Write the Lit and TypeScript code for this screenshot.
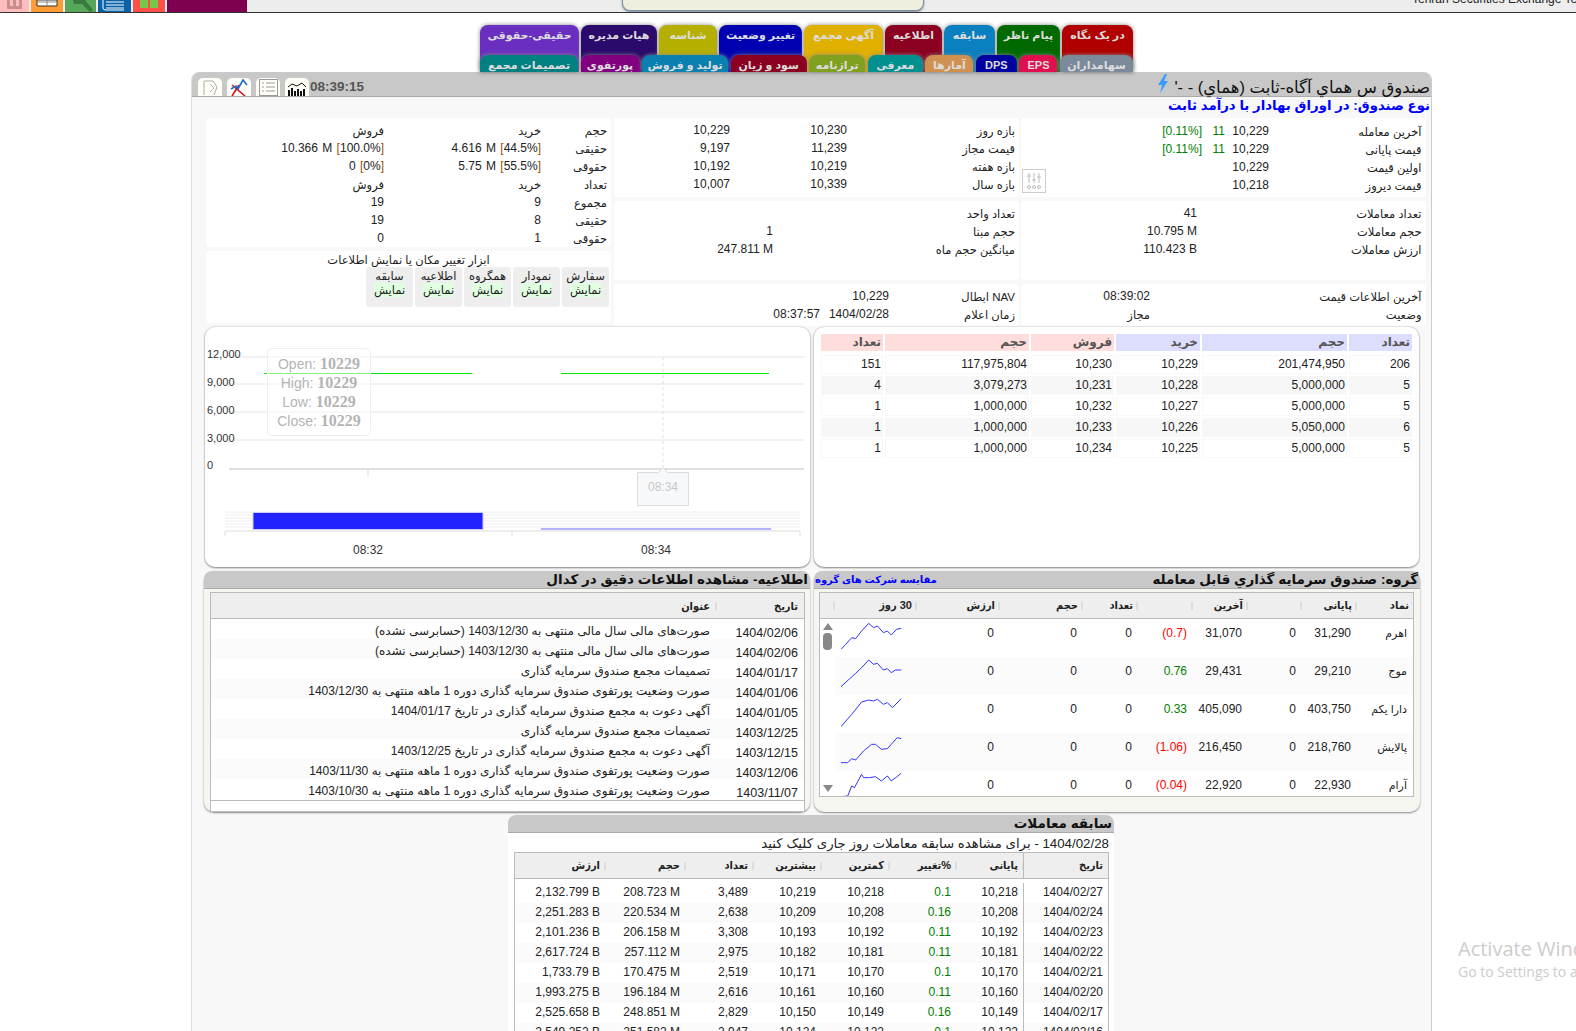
import { LitElement, html, css, svg } from 'lit';
import { customElement } from 'lit/decorators.js';

const row1 = [
  ['در یک نگاه', 71, '#b00000'],
  ['پیام ناظر', 63, '#006a00'],
  ['سابقه', 51, '#0a80c0'],
  ['اطلاعیه', 57, '#8b0020'],
  ['آگهی مجمع', 79, '#e0b000'],
  ['تغییر وضعیت', 83, '#0000b0'],
  ['شناسه', 58, '#b5b000'],
  ['هیات مدیره', 76, '#2a0a6a'],
  ['حقیقی-حقوقی', 99, '#6a2fc0'],
] as const;

const row2 = [
  ['سهامداران', 73, '#7a8a9a'],
  ['EPS', 38, '#e01050'],
  ['DPS', 41, '#0000a0'],
  ['آمارها', 48, '#d09050'],
  ['معرفی', 55, '#009090'],
  ['ترازنامه', 56, '#80a020'],
  ['سود و زیان', 76, '#8b0020'],
  ['تولید و فروش', 86, '#0a80b0'],
  ['پورتفوی', 59, '#800080'],
  ['تصمیمات مجمع', 98, '#008080'],
] as const;

const orders = [
  ['151', '117,975,804', '10,230', '10,229', '201,474,950', '206'],
  ['4', '3,079,273', '10,231', '10,228', '5,000,000', '5'],
  ['1', '1,000,000', '10,232', '10,227', '5,000,000', '5'],
  ['1', '1,000,000', '10,233', '10,226', '5,050,000', '6'],
  ['1', '1,000,000', '10,234', '10,225', '5,000,000', '5'],
];

const news = [
  ['1404/02/06', 'صورت‌های مالی سال مالی منتهی به 1403/12/30 (حسابرسی نشده)'],
  ['1404/02/06', 'صورت‌های مالی سال مالی منتهی به 1403/12/30 (حسابرسی نشده)'],
  ['1404/01/17', 'تصمیمات مجمع صندوق سرمایه گذاری'],
  ['1404/01/06', 'صورت وضعیت پورتفوی صندوق سرمایه گذاری دوره 1 ماهه منتهی به 1403/12/30'],
  ['1404/01/05', 'آگهی دعوت به مجمع صندوق سرمایه گذاری در تاریخ 1404/01/17'],
  ['1403/12/25', 'تصمیمات مجمع صندوق سرمایه گذاری'],
  ['1403/12/15', 'آگهی دعوت به مجمع صندوق سرمایه گذاری در تاریخ 1403/12/25'],
  ['1403/12/06', 'صورت وضعیت پورتفوی صندوق سرمایه گذاری دوره 1 ماهه منتهی به 1403/11/30'],
  ['1403/11/07', 'صورت وضعیت پورتفوی صندوق سرمایه گذاری دوره 1 ماهه منتهی به 1403/10/30'],
];

// spark points are in the reference's zoomed units, so the viewBox scales them down
const group = [
  { top: 159, name: 'اهرم', close: '31,290', last: '31,070', change: '(0.7)', up: false,
    spark: '78,250 90,235 105,215 115,218 130,195 148,172 160,185 170,180 185,200 195,195 205,207 218,190 230,187' },
  { top: 273, name: 'موج', close: '29,210', last: '29,431', change: '0.76', up: true,
    spark: '78,362 100,338 115,322 130,305 148,282 160,295 170,292 185,312 195,308 205,320 215,312 230,312' },
  { top: 387, name: 'دارا یکم', close: '403,750', last: '405,090', change: '0.33', up: true,
    spark: '78,482 105,445 130,408 148,402 160,405 170,400 185,415 195,410 208,425 230,398' },
  { top: 501, name: 'پالایش', close: '218,760', last: '216,450', change: '(1.06)', up: false,
    spark: '78,590 95,590 105,578 115,582 135,555 155,535 165,535 180,550 195,548 220,515 230,518' },
  { top: 615, name: 'آرام', close: '22,930', last: '22,920', change: '(0.04)', up: false,
    spark: '78,692 95,690 105,660 112,665 130,625 135,635 150,635 165,632 180,645 195,630 205,645 230,622' },
];

const history = [
  ['2,132.799 B', '208.723 M', '3,489', '10,219', '10,218', '0.1', '10,218', '1404/02/27'],
  ['2,251.283 B', '220.534 M', '2,638', '10,209', '10,208', '0.16', '10,208', '1404/02/24'],
  ['2,101.236 B', '206.158 M', '3,308', '10,193', '10,192', '0.11', '10,192', '1404/02/23'],
  ['2,617.724 B', '257.112 M', '2,975', '10,182', '10,181', '0.11', '10,181', '1404/02/22'],
  ['1,733.79 B', '170.475 M', '2,519', '10,171', '10,170', '0.1', '10,170', '1404/02/21'],
  ['1,993.275 B', '196.184 M', '2,616', '10,161', '10,160', '0.11', '10,160', '1404/02/20'],
  ['2,525.658 B', '248.851 M', '2,829', '10,150', '10,149', '0.16', '10,149', '1404/02/17'],
  ['2,549.252 B', '251.582 M', '2,947', '10,124', '10,122', '0.1', '10,122', '1404/02/16'],
];

@customElement('app-root')
export class AppRoot extends LitElement {
  static styles = css`
    :host {
      display: block;
      position: relative;
      height: 1031px;
      overflow: hidden;
      background: #fff;
      color: #222;
      font: 12px/18px "Liberation Sans", "DejaVu Sans", sans-serif;
    }
    .topbar {
      display: flex;
      height: 12px;
      gap: 2px;
      background: #ededed;
      border-bottom: 1px solid #333;
      overflow: hidden;
      position: relative;
    }
    .topbar .app { height: 12px; flex: none; }
    .topbar svg { display: block; }
    .notice {
      position: absolute;
      left: 622px;
      top: -10px;
      width: 300px;
      height: 19px;
      background: #efefdf;
      border: 1px solid #7f8f9f;
      border-radius: 8px;
      box-shadow: 0 1px 2px #789;
    }
    .corp {
      position: absolute;
      left: 1412px;
      top: -8px;
      font-size: 12px;
      line-height: 14px;
      white-space: nowrap;
    }
    .tabs { margin: 12px 0 0 480px; width: 653px; height: 47px; }
    .tabrow { display: flex; flex-direction: row-reverse; gap: 2px; }
    .tabrow .tab {
      border-radius: 8px 8px 0 0;
      color: #ddd;
      font-size: 11px;
      font-weight: bold;
      text-align: center;
      white-space: nowrap;
      box-shadow: 0 0 4px #888;
    }
    .tabrow.upper .tab { height: 47px; line-height: 21px; }
    .tabrow.lower { margin-top: -17px; gap: 2.6px; position: relative; }
    .tabrow.lower .tab { height: 17px; line-height: 21px; overflow: hidden; }

    .main {
      margin-left: 191px;
      width: 1241px;
      min-height: 960px;
      background: #f8f8f8;
      border-right: 1px solid #ccc;
      border-left: 1px solid #ddd;
      border-radius: 8px 8px 0 0;
      box-sizing: border-box;
    }
    .mainhead {
      display: flex;
      align-items: flex-end;
      height: 25px;
      background: #c8c8c8;
      border-bottom: 1px solid #aaa;
      border-radius: 8px 8px 0 0;
      padding: 0 1px 0 6px;
      box-sizing: border-box;
    }
    .tool {
      width: 24px;
      height: 18px;
      margin-right: 5px;
      background: #fffff8;
      border-radius: 5px 5px 0 0;
    }
    .tool svg { display: block; }
    .clock { font-size: 13.5px; font-weight: bold; color: #555; line-height: 18px; margin-left: -4px; }
    .grow { flex: 1; }
    .bolt { margin: 0 5px 3px 0; }
    .fundname { font-size: 16.5px; line-height: 18px; color: #111; direction: rtl; white-space: nowrap; }
    .fundtype {
      height: 21px;
      line-height: 17px;
      padding-right: 1px;
      text-align: right;
      direction: rtl;
      color: #0000ff;
      font-size: 13.3px;
      font-weight: bold;
    }
    .info { display: flex; gap: 3px; padding-left: 14px; }
    .left { display: flex; flex-direction: column; gap: 4px; width: 405px; flex: none; }
    .right {
      display: grid;
      grid-template-columns: 405px 405px;
      grid-template-rows: 79px 79px 42px;
      gap: 4px 2px;
    }
    .card { background: #fff; border-radius: 4px; box-sizing: border-box; }
    .rows { display: grid; grid-auto-rows: 18px; padding: 3px 4px 0 0; text-align: right; }
    .l { font-size: 11.5px; line-height: 20px; direction: rtl; white-space: nowrap; }
    .left .card:first-child { height: 129px; }
    .vol { word-spacing: 1px; }
    .cols-a { grid-template-columns: 178px 157px 66px; }
    .cols-c { grid-template-columns: 116px 117px 168px; }
    .cols-d { grid-template-columns: 181px 23px 44px 152.5px; padding-right: 4.500px; padding-top: 4px; }
    .cols-e { grid-template-columns: 176px 224.5px; padding-right: 4.500px; }
    .cols-f { grid-template-columns: 159px 242px; }
    .cols-g { grid-template-columns: 129px 271.5px; padding-right: 4.500px; }
    .cols-h { grid-template-columns: 206px 69px 126px; }
    .up { color: #008000; }
    .down { color: #ff0000; }
    .br { color: #a05000; }
    .sliders {
      grid-column: 1;
      grid-row: 3 / span 2;
      justify-self: start;
      align-self: end;
      margin: 0 0 1px 1px;
      display: block;
    }
    .tools { height: 72px; text-align: center; }
    .toolstitle { font-size: 11.5px; line-height: 18px; height: 16px; direction: rtl; text-align: center; }
    .pickers { display: flex; flex-direction: row-reverse; gap: 2px; padding: 0 2px; }
    .pick {
      width: 47px;
      height: 40px;
      background: #eee;
      border-radius: 3px;
      line-height: 14px;
      padding-top: 2px;
      box-sizing: border-box;
      font-size: 11.5px;
    }
    .pick b { font-weight: normal; background: #e0ffe0; display: inline-block; }

    .pair { display: flex; gap: 4px; padding-left: 13px; }
    .box {
      width: 605px;
      height: 240px;
      flex: none;
      background: #fff;
      border-radius: 10px;
      box-shadow: 0 1px 2px #888, 0 0 2px #bbb;
      margin-top: 1px;
      box-sizing: border-box;
    }
    .chart { display: block; }
    .chart text { font: 11px "Liberation Sans", sans-serif; fill: #333; }
    .orders {
      display: grid;
      grid-template-columns: 62px 144px 83px 84px 145px 63px;
      grid-auto-rows: 19px;
      gap: 2px;
      padding: 7px 0 0 7px;
      text-align: right;
    }
    .orders > div { padding-right: 2px; background: #fff; outline: 1px solid #f8f8f8; outline-offset: -1px; line-height: 19px; }
    .orders .hd { font-weight: bold; color: #555; height: 17px; line-height: 17px; margin-bottom: 1px; outline: none; font-size: 12px; }
    .orders .sell { background: #ffdddd; }
    .orders .buy { background: #ddddff; }
    .orders .alt { background: #f7f7f7; }
    .panels { display: flex; gap: 4px; padding-left: 12px; margin-top: 4px; }
    .panel {
      width: 606px;
      height: 241px;
      flex: none;
      background: #f6f6f1;
      border-radius: 10px;
      box-shadow: 0 1px 2px #888;
      box-sizing: border-box;
    }
    .panelhead {
      display: flex;
      justify-content: space-between;
      align-items: center;
      height: 17px;
      background: #c8c8c8;
      border-bottom: 1px solid #aaa;
      border-radius: 8px 8px 0 0;
      padding: 0 2px 0 1px;
      font-size: 13.5px;
      font-weight: bold;
      color: #111;
      white-space: nowrap;
    }
    .panelhead span { direction: rtl; }
    .panelhead .link { color: #0000ff; font-size: 10px; }
    .grid { background: #fff; border: 1px solid #bbb; box-sizing: border-box; overflow: hidden; }
    .newsgrid { margin: 3px 0 0 6px; width: 595px; height: 220px; }
    .ghead {
      height: 26px;
      background: #eee;
      border-bottom: 1px solid #bbb;
      box-sizing: border-box;
      font-weight: bold;
      font-size: 11px;
      font-stretch: condensed;
      line-height: 27px;
    }
    .ghead .c { position: relative; direction: rtl; }
    .ghead .c::after { content: ""; position: absolute; right: 0; top: 9px; width: 2px; height: 8px; background: #ddd; }
    .ghead .c:last-child::after { display: none; }
    .newsrow, .newshead { display: grid; grid-template-columns: 506px 1fr; text-align: right; }
    .newsrow { height: 20px; font-size: 12px; line-height: 24px; }
    .newsrow.alt, .grow-alt { background: #fbfbfb; }
    .newsrow .t { padding-right: 7px; direction: rtl; text-align: right; white-space: nowrap; }
    .newsrow .d { padding-right: 6px; line-height: 28px; font-size: 12.5px; }
    .newshead .t { padding-right: 7px; }
    .newshead .d { padding-right: 6px; }
    .newslist { height: 181px; border-bottom: 1px solid #bbb; overflow: hidden; }

    .groupgrid { margin: 3px 0 0 5px; width: 595px; height: 205px; }
    .gcols { display: grid; grid-template-columns: 15px 82px 83px 83px 55px 55px 55px 54px 55px 57px; text-align: right; line-height: 25px; }
    .gcols > .c { padding-right: 5px; }
    .groupbody { display: flex; height: 179px; }
    .scroll { width: 15px; flex: none; display: flex; flex-direction: column; align-items: center; padding: 4px 0 6px; box-sizing: border-box; }
    .scroll .thumb { width: 9px; height: 17px; background: #888; border-radius: 4px; margin-top: 3px; }
    .scroll .grow { flex: 1; }
    .tri-up { width: 0; height: 0; border: 5px solid transparent; border-top: 0; border-bottom: 7px solid #888; }
    .tri-down { width: 0; height: 0; border: 5px solid transparent; border-bottom: 0; border-top: 7px solid #888; }
    .grouprows { flex: 1; overflow: hidden; }
    .grow-row { display: grid; grid-template-columns: 82px 83px 83px 55px 55px 55px 54px 55px 57px; height: 38px; text-align: right; line-height: 29px; }
    .grow-row > div { padding-right: 6px; }
    .grow-row .name { font-size: 11px; padding-right: 7px; }
    .grow-row .spark { padding: 0 0 0 6px; }
    .spark svg { display: block; }

    .hist { margin: 3px 0 0 316px; width: 606px; height: 240px; background: #fff; border-radius: 10px 10px 0 0; }
    .hist .panelhead { padding-right: 2px; }
    .histnote { direction: rtl; text-align: right; padding-right: 5px; line-height: 22px; height: 19px; font-size: 13.3px; white-space: nowrap; }
    .histgrid { margin-left: 6px; width: 595px; height: 200px; border-bottom: 0; }
    .hcols { display: grid; grid-template-columns: 91px 80px 68px 68px 68px 67px 67px 86px; text-align: right; }
    .hcols > div { padding-right: 6px; }
    .hcols .date { border-left: 1px solid #bbb; padding-right: 7px; margin-left: -1px; }
    .hrow { height: 20px; line-height: 18px; }
    .hrow.alt { background: #fbfbfb; }
    .hhead { line-height: 25px; }
    .histbody { padding-top: 4px; }

    .watermark { position: absolute; left: 1458px; top: 936px; color: #ccc; font-family: "Open Sans", sans-serif; font-size: 20px; line-height: 26px; white-space: nowrap; }
    .watermark small { display: block; font-size: 14px; line-height: 20px; }
  `;

  private renderTopbar() {
    return html`
      <div class="topbar">
        <div class="app" style="width:29px;background:#ffbcbc">
          <svg width="29" height="12"><path d="M7 0v9h15V0h-3v6h-3V0h-3v6h-3V0z" fill="#c98f8f"/></svg>
        </div>
        <div class="app" style="width:32px;background:#ff9c33">
          <svg width="32" height="12"><path d="M6 0h20v6H6z" fill="#fff" stroke="#333"/><path d="M16 0v6M6 2h20" stroke="#888"/></svg>
        </div>
        <div class="app" style="width:31px;background:#55a85a">
          <svg width="31" height="12"><path d="M8 0l12 0 8 10-3 2-8-8H9z" fill="#3a7a3f"/></svg>
        </div>
        <div class="app" style="width:33px;background:#0a62a8">
          <svg width="33" height="12"><path d="M5 0v8q0 2 3 2h18M8 2h18M8 5h18M8 8h18" stroke="#fff" fill="none"/></svg>
        </div>
        <div class="app" style="width:32px;background:#ff5048">
          <svg width="32" height="12"><path d="M7 0h8v8H7zM17 0h8v8h-8z" fill="#75c84a"/></svg>
        </div>
        <div class="app" style="width:80px;background:#800050"></div>
        <div class="notice"></div>
        <div class="corp">Tehran Securities Exchange Tec</div>
      </div>`;
  }

  private renderTabs() {
    return html`
      <div class="tabs">
        <div class="tabrow upper">
          ${row1.map(([t, w, c]) => html`<div class="tab" style="width:${w}px;background:${c}">${t}</div>`)}
        </div>
        <div class="tabrow lower">
          ${row2.map(([t, w, c]) => html`<div class="tab" style="width:${w}px;background:${c}">${t}</div>`)}
        </div>
      </div>`;
  }

  private renderMainHead() {
    return html`
      <div class="mainhead">
        <div class="tool">
          <svg width="24" height="18" fill="none" stroke="#aaa">
            <path d="M6 17V3h9l4 6-3 8"/><path d="M12 6l4 4-4 4" stroke="#bbb"/>
          </svg>
        </div>
        <div class="tool">
          <svg width="24" height="18" fill="none" stroke-width="1.6">
            <path d="M5 7l13 11M5 18l7-11" stroke="#e01020"/><path d="M4 11l5-3 2 3 5-9 4 5" stroke="#1a70c8"/>
          </svg>
        </div>
        <div class="tool">
          <svg width="24" height="18" fill="none" stroke="#999">
            <rect x="3.5" y="1.5" width="18" height="16"/><path d="M6 5h2M10 5h9M6 9h2M10 9h9M6 13h2M10 13h9"/>
          </svg>
        </div>
        <div class="tool">
          <svg width="24" height="18" fill="none" stroke="#111">
            <path d="M3 9l4-3 5 2 5-3 4 4"/>
            <path d="M4 18v-6M7 18v-8M10 18v-5M13 18v-7M16 18v-5M19 18v-7" stroke-width="2"/>
          </svg>
        </div>
        <div class="clock">08:39:15</div>
        <div class="grow"></div>
        <svg class="bolt" width="12" height="19"><path d="M8 0L1 11h4l-2 8 8-12H7l3-7z" fill="#3a9cff"/></svg>
        <div class="fundname">صندوق س هماي آگاه-ثابت (هماي) - -'</div>
      </div>
      <div class="fundtype">نوع صندوق: در اوراق بهادار با درآمد ثابت</div>`;
  }

  private renderInfo() {
    const vol = (v: string, p: string) => html`<div class="vol">${v} <span class="br">[</span>${p}<span class="br">]</span></div>`;
    return html`
      <div class="info">
        <div class="left">
          <div class="card rows cols-a">
            <div class="l">فروش</div><div class="l">خرید</div><div class="l">حجم</div>
            ${vol('10.366 M', '100.0%')}${vol('4.616 M', '44.5%')}<div class="l">حقیقی</div>
            ${vol('0', '0%')}${vol('5.75 M', '55.5%')}<div class="l">حقوقی</div>
            <div class="l">فروش</div><div class="l">خرید</div><div class="l">تعداد</div>
            <div>19</div><div>9</div><div class="l">مجموع</div>
            <div>19</div><div>8</div><div class="l">حقیقی</div>
            <div>0</div><div>1</div><div class="l">حقوقی</div>
          </div>
          <div class="card tools">
            <div class="toolstitle">ابزار تغییر مکان یا نمایش اطلاعات</div>
            <div class="pickers">
              ${['سفارش', 'نمودار', 'همگروه', 'اطلاعیه', 'سابقه'].map(
                (t) => html`<div class="pick">${t}<br /><b>نمایش</b></div>`
              )}
            </div>
          </div>
        </div>
        <div class="right">
          <div class="card rows cols-c">
            <div>10,229</div><div>10,230</div><div class="l">بازه روز</div>
            <div>9,197</div><div>11,239</div><div class="l">قیمت مجاز</div>
            <div>10,192</div><div>10,219</div><div class="l">بازه هفته</div>
            <div>10,007</div><div>10,339</div><div class="l">بازه سال</div>
          </div>
          <div class="card rows cols-d">
            <div class="up">[0.11%]</div><div class="up">11</div><div>10,229</div><div class="l">آخرین معامله</div>
            <div class="up">[0.11%]</div><div class="up">11</div><div>10,229</div><div class="l">قیمت پایانی</div>
            <svg class="sliders" width="24" height="24" fill="none" stroke="#bbb">
              <rect x=".5" y=".5" width="23" height="23" stroke="#ccc"/>
              <path d="M7 4v10M12 4v10M17 4v10M5 7h4M10 11h4M15 8h4"/>
              <circle cx="7" cy="18" r="1.5"/><circle cx="12" cy="18" r="1.5"/><circle cx="17" cy="18" r="1.5"/>
            </svg>
            <div style="grid-column:3">10,229</div><div class="l">اولین قیمت</div>
            <div style="grid-column:3">10,218</div><div class="l">قیمت دیروز</div>
          </div>
          <div class="card rows cols-f">
            <div></div><div class="l">تعداد واحد</div>
            <div>1</div><div class="l">حجم مبنا</div>
            <div>247.811 M</div><div class="l">میانگین حجم ماه</div>
          </div>
          <div class="card rows cols-e">
            <div>41</div><div class="l">تعداد معاملات</div>
            <div>10.795 M</div><div class="l">حجم معاملات</div>
            <div>110.423 B</div><div class="l">ارزش معاملات</div>
          </div>
          <div class="card rows cols-h">
            <div></div><div>10,229</div><div class="l">NAV ابطال</div>
            <div>08:37:57</div><div>1404/02/28</div><div class="l">زمان اعلام</div>
          </div>
          <div class="card rows cols-g">
            <div>08:39:02</div><div class="l">آخرین اطلاعات قیمت</div>
            <div class="l">مجاز</div><div class="l">وضعیت</div>
          </div>
        </div>
      </div>`;
  }

  private renderChart() {
    // coordinates are relative to the card's top-left corner (205,327)
    const grid = [30, 57, 85, 113];
    const labels = ['12,000', '9,000', '6,000', '3,000', '0'];
    return html`
      <svg class="chart" width="605" height="240">
        ${grid.map((y) => svg`<line x1="24" x2="599" y1=${y} y2=${y} stroke="#e4e4e4"/>`)}
        <line x1="24" x2="599" y1="142" y2="142" stroke="#e0e0e0" stroke-width="2"/>
        <line x1="163" x2="163" y1="142" y2="149" stroke="#ddd"/>
        ${labels.map((t, i) => svg`<text x="2" y=${31 + i * 28 - (i === 4 ? 1 : 0)}>${t}</text>`)}
        <line x1="59" x2="267" y1="46.5" y2="46.5" stroke="#00e800" stroke-width="1.2"/>
        <line x1="356" x2="564" y1="46.5" y2="46.5" stroke="#00e800" stroke-width="1.2"/>
        <line x1="458" x2="458" y1="30" y2="140" stroke="#ddd" stroke-dasharray="3 3"/>
        <rect x="62.5" y="21.5" width="103" height="87" rx="4" fill="#fff" fill-opacity=".5" stroke="#eee"/>
        ${[['Open', 42], ['High', 61], ['Low', 80], ['Close', 99]].map(
          ([k, y]) => svg`<text x="114" y=${y} text-anchor="middle" style="font-size:14px;fill:#b4b4b4">${k}: <tspan style="font:bold 16px 'Liberation Serif',serif">10229</tspan></text>`
        )}
        <path d="M432.5 145.5h21l4.500-5 4.500 5h21v33h-51z" fill="#f7f8fa" stroke="#ddd"/>
        <text x="458" y="164" text-anchor="middle" style="font-size:12px;fill:#c8c8c8">08:34</text>
        ${[185, 188, 191, 194, 197, 200].map((y) => svg`<line x1="20" x2="595" y1=${y} y2=${y} stroke="#eee"/>`)}
        <rect x="48" y="185.500" width="230" height="17" fill="#2222ff" stroke="#ccf"/>
        <line x1="336" x2="566" y1="202" y2="202" stroke="#99f" stroke-width="1.500"/>
        <path d="M20 209v-5h575v5M307 204v5" fill="none" stroke="#ddd" stroke-width="1"/>
        <text x="163" y="227" text-anchor="middle" style="font-size:12px">08:32</text>
        <text x="451" y="227" text-anchor="middle" style="font-size:12px">08:34</text>
      </svg>`;
  }

  private renderOrders() {
    const heads: [string, string][] = [
      ['تعداد', 'sell'], ['حجم', 'sell'], ['فروش', 'sell'],
      ['خرید', 'buy'], ['حجم', 'buy'], ['تعداد', 'buy'],
    ];
    return html`
      <div class="orders">
        ${heads.map(([t, c]) => html`<div class="hd ${c}">${t}</div>`)}
        ${orders.map((r, i) => r.map((v) => html`<div class=${i % 2 ? 'alt' : ''}>${v}</div>`))}
      </div>`;
  }

  private renderNews() {
    return html`
      <div class="panel">
        <div class="panelhead"><span></span><span>اطلاعیه- مشاهده اطلاعات دقیق در کدال</span></div>
        <div class="grid newsgrid">
          <div class="ghead newshead"><div class="c t">عنوان</div><div class="d">تاریخ</div></div>
          <div class="newslist">
            ${news.map(([d, t], i) => html`
              <div class="newsrow ${i % 2 ? 'alt' : ''}"><div class="t">${t}</div><div class="d">${d}</div></div>`)}
          </div>
        </div>
      </div>`;
  }

  private renderGroup() {
    const heads = ['', '30 روز', 'ارزش', 'حجم', 'تعداد', '', 'آخرین', '', 'پایانی', 'نماد'];
    return html`
      <div class="panel">
        <div class="panelhead"><span class="link">مقایسه شرکت های گروه</span><span>گروه: صندوق سرمایه گذاري قابل معامله</span></div>
        <div class="grid groupgrid">
          <div class="ghead gcols">${heads.map((h) => html`<div class="c">${h}</div>`)}</div>
          <div class="groupbody">
            <div class="scroll">
              <div class="tri-up"></div><div class="thumb"></div><div class="grow"></div><div class="tri-down"></div>
            </div>
            <div class="grouprows">
              ${group.map((r, i) => html`
                <div class="grow-row ${i % 2 ? 'grow-alt' : ''}">
                  <div class="spark">
                    <svg width="61" height="38" viewBox="78 ${r.top} 154 114" preserveAspectRatio="none">
                      <polyline points=${r.spark} fill="none" stroke="#3333ff" vector-effect="non-scaling-stroke"/>
                    </svg>
                  </div>
                  <div>0</div><div>0</div><div>0</div>
                  <div class=${r.up ? 'up' : 'down'}>${r.change}</div>
                  <div>${r.last}</div><div>0</div><div>${r.close}</div>
                  <div class="name">${r.name}</div>
                </div>`)}
            </div>
          </div>
        </div>
      </div>`;
  }

  private renderHistory() {
    const heads = ['ارزش', 'حجم', 'تعداد', 'بیشترین', 'کمترین', '%تغییر', 'پایانی', 'تاریخ'];
    return html`
      <div class="hist">
        <div class="panelhead"><span></span><span>سابقه معاملات</span></div>
        <div class="histnote">1404/02/28 - برای مشاهده سابقه معاملات روز جاری کلیک کنید</div>
        <div class="grid histgrid">
          <div class="ghead hcols hhead">
            ${heads.map((h, i) => html`<div class="c ${i === 7 ? 'date' : ''}">${h}</div>`)}
          </div>
          <div class="histbody">
            ${history.map((r, n) => html`
              <div class="hcols hrow ${n % 2 ? 'alt' : ''}">
                ${r.map((v, i) => html`<div class=${i === 5 ? 'up' : i === 7 ? 'date' : ''}>${v}</div>`)}
              </div>`)}
          </div>
        </div>
      </div>`;
  }

  render() {
    return html`
      ${this.renderTopbar()}
      ${this.renderTabs()}
      <div class="main">
        ${this.renderMainHead()}
        ${this.renderInfo()}
        <div class="pair">
          <div class="box">${this.renderChart()}</div>
          <div class="box">${this.renderOrders()}</div>
        </div>
        <div class="panels">${this.renderNews()}${this.renderGroup()}</div>
        ${this.renderHistory()}
      </div>
      <div class="watermark">Activate Windows<small>Go to Settings to activate Windows.</small></div>
    `;
  }
}
